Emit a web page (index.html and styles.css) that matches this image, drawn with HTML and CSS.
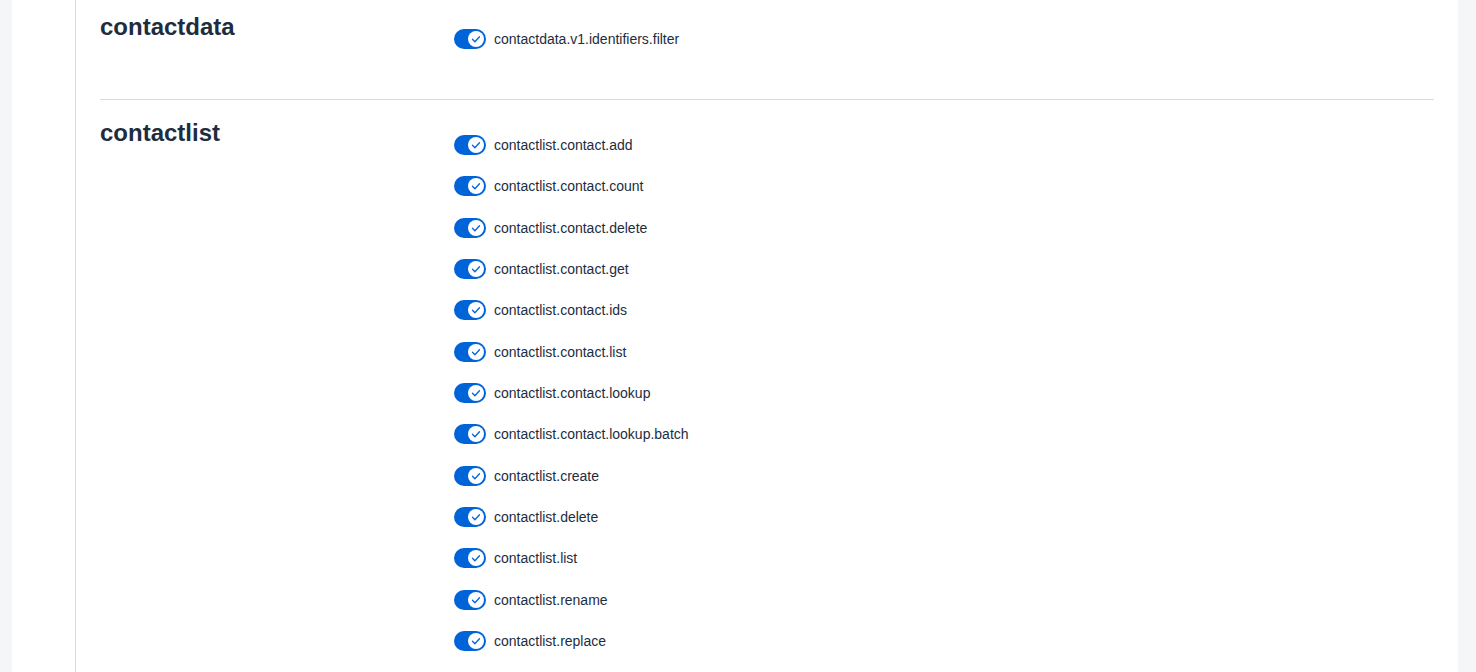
FILE: index.html
```html
<!DOCTYPE html>
<html lang="en">
  <head>
    <meta charset="UTF-8" />
    <meta name="viewport" content="width=device-width, initial-scale=1.0" />
    <title>Scopes</title>
    <link rel="stylesheet" href="styles.css">
  </head>
  <body>
    <main class="card">
      <div class="rail"></div>
      <div class="content">
        <section class="group">
          <h2>contactdata</h2>
          <ul class="scopes">
            <li><span class="switch"><span class="knob"><svg viewBox="0 0 16 16"><path d="M4.5 8.3l2.4 2.4 4.6-5"/></svg></span></span>contactdata.v1.identifiers.filter</li>
          </ul>
        </section>

        <section class="group">
          <h2>contactlist</h2>
          <ul class="scopes" id="contactlist"></ul>
        </section>
      </div>
    </main>

    <script>
      const scopes = [
        "contactlist.contact.add",
        "contactlist.contact.count",
        "contactlist.contact.delete",
        "contactlist.contact.get",
        "contactlist.contact.ids",
        "contactlist.contact.list",
        "contactlist.contact.lookup",
        "contactlist.contact.lookup.batch",
        "contactlist.create",
        "contactlist.delete",
        "contactlist.list",
        "contactlist.rename",
        "contactlist.replace"
      ];
      const list = document.getElementById("contactlist");
      const check = '<span class="switch"><span class="knob"><svg viewBox="0 0 16 16"><path d="M4.5 8.3l2.4 2.4 4.6-5"/></svg></span></span>';
      scopes.forEach((name) => {
        list.innerHTML += `<li>${check}${name}</li>`;
      });
    </script>
  </body>
</html>
```

FILE: styles.css
```css
* {
  box-sizing: border-box;
}

body {
  margin: 0;
  padding: 0 18px 0 12px;
  background: #f5f6f7;
  font-family: "Liberation Sans", Arial, sans-serif;
  color: #1d2d3e;
  height: 672px;
  overflow: hidden;
}

.card {
  display: flex;
  background: #fff;
  min-height: 100%;
}

.rail {
  width: 64px;
  flex: none;
  border-right: 1px solid #d9d9d9;
}

.content {
  flex: 1;
  padding: 0 24px;
}

.group {
  display: grid;
  grid-template-columns: 354px 1fr;
  padding: 17px 0 40px;
  border-bottom: 1px solid #d9d9d9;
}

.group:first-child {
  padding-top: 11px;
}

h2 {
  margin: 0;
  font-size: 24px;
  line-height: 32px;
  font-weight: bold;
}

.scopes {
  list-style: none;
  margin: 0;
  padding: 7px 0 0;
}

.scopes li {
  display: flex;
  align-items: center;
  height: 41.33px;
  font-size: 14px;
}

.switch {
  width: 32px;
  height: 20px;
  border-radius: 10px;
  background: #0064d9;
  margin-right: 8px;
  display: flex;
  align-items: center;
  justify-content: flex-end;
  padding: 2px;
}

.knob {
  width: 16px;
  height: 16px;
  border-radius: 50%;
  background: #fff;
  display: flex;
}

.knob svg {
  width: 16px;
  height: 16px;
  fill: none;
  stroke: #0064d9;
  stroke-width: 1.3;
  stroke-linecap: round;
  stroke-linejoin: round;
}
```
